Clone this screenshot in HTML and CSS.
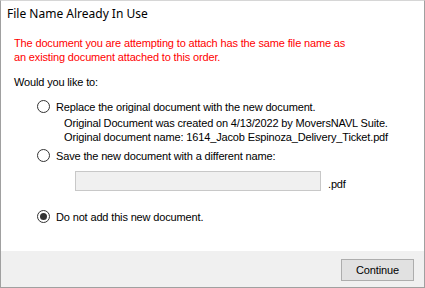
FILE: index.html
```html
<!DOCTYPE html>
<html lang="en">
<head>
    <meta charset="utf-8">
    <title>File Name Already In Use</title>
    <link rel="stylesheet" href="styles.css">
</head>
<body>
    <div class="dialog" role="dialog" aria-labelledby="dialogTitle">
        <header class="dialog-title" id="dialogTitle">File Name Already In Use</header>

        <main class="dialog-body">
            <p class="warning">The document you are attempting to attach has the same file name as<br>an existing document attached to this order.</p>
            <p class="question">Would you like to:</p>

            <div class="options">
                <label class="option">
                    <input type="radio" name="choice" value="replace">
                    <span>Replace the original document with the new document.</span>
                </label>
                <div class="details">
                    <p>Original Document was created on 4/13/2022 by MoversNAVL Suite.</p>
                    <p>Original document name: 1614_Jacob Espinoza_Delivery_Ticket.pdf</p>
                </div>

                <label class="option">
                    <input type="radio" name="choice" value="rename">
                    <span>Save the new document with a different name:</span>
                </label>
                <div class="rename">
                    <input type="text" class="name-input" disabled>
                    <span>.pdf</span>
                </div>

                <label class="option option-last">
                    <input type="radio" name="choice" value="skip" checked>
                    <span>Do not add this new document.</span>
                </label>
            </div>
        </main>

        <footer class="dialog-footer">
            <button type="button" class="btn">Continue</button>
        </footer>
    </div>
</body>
</html>
```

FILE: styles.css
```css
body {
    margin: 0;
    padding: 0;
    background: #ffffff;
}
.dialog {
    width: 425px;
    height: 288px;
    box-sizing: border-box;
    border: 1px solid #a0a0a0;
    border-top-color: #d6d6d6;
    display: flex;
    flex-direction: column;
    font-family: "Liberation Sans", Arial, sans-serif;
    font-size: 11px;
    letter-spacing: -0.15px;
    color: #000000;
}
.dialog-title {
    height: 26px;
    padding-left: 6px;
    font-family: "Noto Sans", sans-serif;
    font-size: 12px;
    letter-spacing: 0;
    line-height: 25px;
}
.dialog-body {
    flex: 1;
    padding: 9px 0 0 13px;
}
.dialog-body p {
    margin: 0;
}
.warning {
    color: #ff0000;
    line-height: 14px;
}
.question {
    margin-top: 11px !important;
    line-height: 14px;
}
.options {
    padding-left: 23px;
    margin-top: 10px;
}
.option {
    display: flex;
    align-items: center;
    gap: 6px;
    height: 15px;
}
.option input {
    appearance: none;
    -webkit-appearance: none;
    width: 13px;
    height: 13px;
    margin: 0;
    box-sizing: border-box;
    border: 1px solid #333333;
    border-radius: 50%;
    background: #ffffff;
    display: flex;
    align-items: center;
    justify-content: center;
}
.option input:checked::after {
    content: "";
    width: 7px;
    height: 7px;
    border-radius: 50%;
    background: #333333;
}
.details {
    padding: 3px 0 4px 27px;
    line-height: 13.5px;
}
.rename {
    display: flex;
    align-items: flex-end;
    gap: 7px;
    padding: 8px 0 0 38px;
    height: 20px;
    margin-bottom: 18px;
}
.name-input {
    width: 246px;
    height: 20px;
    box-sizing: border-box;
    margin: 0;
    background: #f0f0f0;
    border: 1px solid #c8c8c8;
}
.rename span {
    line-height: 14px;
}
.dialog-footer {
    height: 36px;
    background: #f0f0f0;
    display: flex;
    justify-content: flex-end;
    align-items: flex-start;
    padding: 8px 10px 0 0;
    box-sizing: border-box;
}
.btn {
    width: 73px;
    height: 22px;
    background: #e1e1e1;
    border: 1px solid #adadad;
    font-family: "Liberation Sans", Arial, sans-serif;
    font-size: 11px;
    letter-spacing: -0.15px;
    color: #000000;
    padding: 0;
}
```
